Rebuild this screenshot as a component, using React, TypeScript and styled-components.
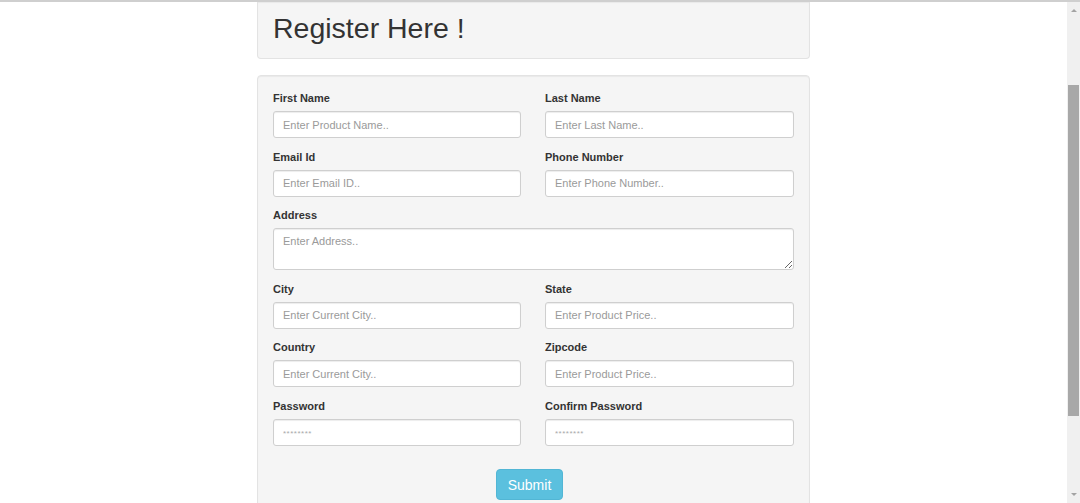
import * as React from "react";
import styled, { createGlobalStyle } from "styled-components";

const GlobalStyle = createGlobalStyle`
  html, body {
    margin: 0;
    padding: 0;
    background: #fff;
    overflow: hidden;
  }
  body {
    font-family: "Liberation Sans", Arial, Helvetica, sans-serif;
    color: #333;
  }
  * {
    box-sizing: border-box;
  }
`;

const SWindow = styled.div`
  display: flex;
  flex-direction: column;
  width: 1080px;
  height: 503px;
  overflow: hidden;
`;

const STopLine = styled.div`
  height: 2px;
  background: #cfcfcf;
  flex-shrink: 0;
`;

const SBody = styled.div`
  display: flex;
  flex: 1;
  min-height: 0;
`;

const SPage = styled.div`
  flex: 1;
  overflow: hidden;
`;

const SContainer = styled.div`
  width: 553px;
  margin: 0 auto;
`;

const SWell = styled.div<{ $top?: boolean }>`
  background: #f5f5f5;
  border: 1px solid #e3e3e3;
  border-top: ${(p) => (p.$top ? "none" : "1px solid #e3e3e3")};
  border-radius: ${(p) => (p.$top ? "0 0 4px 4px" : "4px")};
  box-shadow: inset 0 1px 1px rgba(0, 0, 0, 0.05);
`;

const SHeaderWell = styled(SWell)`
  height: 57px;
  padding: 7px 15px 0;
  margin-bottom: 16px;
`;

const STitle = styled.h1`
  margin: 0;
  font-size: 28.5px;
  font-weight: 400;
  line-height: 38px;
  color: #333;
`;

const SFormWell = styled(SWell)`
  padding: 14px 15px 30px;
`;

const SGrid = styled.div`
  display: grid;
  grid-template-columns: 248px 249px;
  column-gap: 24px;
`;

const SField = styled.div<{ $wide?: boolean }>`
  grid-column: ${(p) => (p.$wide ? "1 / span 2" : "auto")};
  margin-bottom: 10.5px;
`;

const SLabel = styled.label`
  display: block;
  font-size: 11px;
  font-weight: 700;
  line-height: 16px;
  margin-bottom: 5px;
  color: #333;
`;

const SInput = styled.input`
  display: block;
  width: 100%;
  height: 27px;
  padding: 0 9px;
  font-family: inherit;
  font-size: 11px;
  color: #555;
  background: #fff;
  border: 1px solid #cfcfcf;
  border-radius: 3px;
  box-shadow: inset 0 1px 1px rgba(0, 0, 0, 0.075);
  outline: none;

  &::placeholder {
    color: #9a9a9a;
  }
`;

const SPassword = styled(SInput)`
  &::placeholder {
    font-size: 8px;
    letter-spacing: 0.5px;
    color: #aaa;
  }
`;

const STextArea = styled.textarea`
  display: block;
  width: 100%;
  height: 42px;
  padding: 6px 9px;
  font-family: inherit;
  font-size: 11px;
  color: #555;
  background: #fff;
  border: 1px solid #cfcfcf;
  border-radius: 3px;
  box-shadow: inset 0 1px 1px rgba(0, 0, 0, 0.075);
  resize: vertical;
  outline: none;

  &::placeholder {
    color: #9a9a9a;
  }
`;

const SActions = styled.div`
  display: flex;
  justify-content: center;
  padding: 13px 8px 0 0;
`;

const SSubmit = styled.button`
  width: 67px;
  height: 31px;
  padding: 0;
  font-family: inherit;
  font-size: 14px;
  color: #fff;
  background: #5bc0de;
  border: 1px solid #52b6d5;
  border-radius: 4px;
  cursor: pointer;
`;

const SScrollbar = styled.div`
  width: 13px;
  flex-shrink: 0;
  display: flex;
  flex-direction: column;
  align-items: center;
  background: #f0f0f0;
`;

const SArrow = styled.div<{ $down?: boolean }>`
  height: 17px;
  width: 100%;
  display: flex;
  align-items: center;
  justify-content: center;
  flex-shrink: 0;

  &::after {
    content: "";
    border-left: 3px solid transparent;
    border-right: 3px solid transparent;
    ${(p) => (p.$down ? "border-top: 3px solid #a3a3a3;" : "border-bottom: 3px solid #a3a3a3;")}
  }
`;

const SThumbTrack = styled.div`
  flex: 1;
  width: 100%;
  padding: 66px 1px 70px;
  display: flex;
`;

const SThumb = styled.div`
  flex: 1;
  background: #a8a8a8;
`;

interface IFieldDef {
  label: string;
  placeholder: string;
  kind?: "text" | "password" | "area";
}

const rows: IFieldDef[][] = [
  [
    { label: "First Name", placeholder: "Enter Product Name.." },
    { label: "Last Name", placeholder: "Enter Last Name.." },
  ],
  [
    { label: "Email Id", placeholder: "Enter Email ID.." },
    { label: "Phone Number", placeholder: "Enter Phone Number.." },
  ],
  [{ label: "Address", placeholder: "Enter Address..", kind: "area" }],
  [
    { label: "City", placeholder: "Enter Current City.." },
    { label: "State", placeholder: "Enter Product Price.." },
  ],
  [
    { label: "Country", placeholder: "Enter Current City.." },
    { label: "Zipcode", placeholder: "Enter Product Price.." },
  ],
  [
    { label: "Password", placeholder: "********", kind: "password" },
    { label: "Confirm Password", placeholder: "********", kind: "password" },
  ],
];

const renderControl = (f: IFieldDef) => {
  if (f.kind === "area") {
    return <STextArea placeholder={f.placeholder} />;
  }
  if (f.kind === "password") {
    return <SPassword type="password" placeholder={f.placeholder} />;
  }
  return <SInput type="text" placeholder={f.placeholder} />;
};

const App = () => {
  return (
    <SWindow>
      <GlobalStyle />
      <STopLine />
      <SBody>
        <SPage>
          <SContainer>
            <SHeaderWell $top>
              <STitle>{"Register Here !"}</STitle>
            </SHeaderWell>
            <SFormWell>
              <form onSubmit={(e) => e.preventDefault()}>
                <SGrid>
                  {rows.map((row) =>
                    row.map((f) => (
                      <SField key={f.label} $wide={f.kind === "area"}>
                        <SLabel>{f.label}</SLabel>
                        {renderControl(f)}
                      </SField>
                    ))
                  )}
                </SGrid>
                <SActions>
                  <SSubmit type="submit">{`Submit`}</SSubmit>
                </SActions>
              </form>
            </SFormWell>
          </SContainer>
        </SPage>
        <SScrollbar>
          <SArrow />
          <SThumbTrack>
            <SThumb />
          </SThumbTrack>
          <SArrow $down />
        </SScrollbar>
      </SBody>
    </SWindow>
  );
};

export default App;
